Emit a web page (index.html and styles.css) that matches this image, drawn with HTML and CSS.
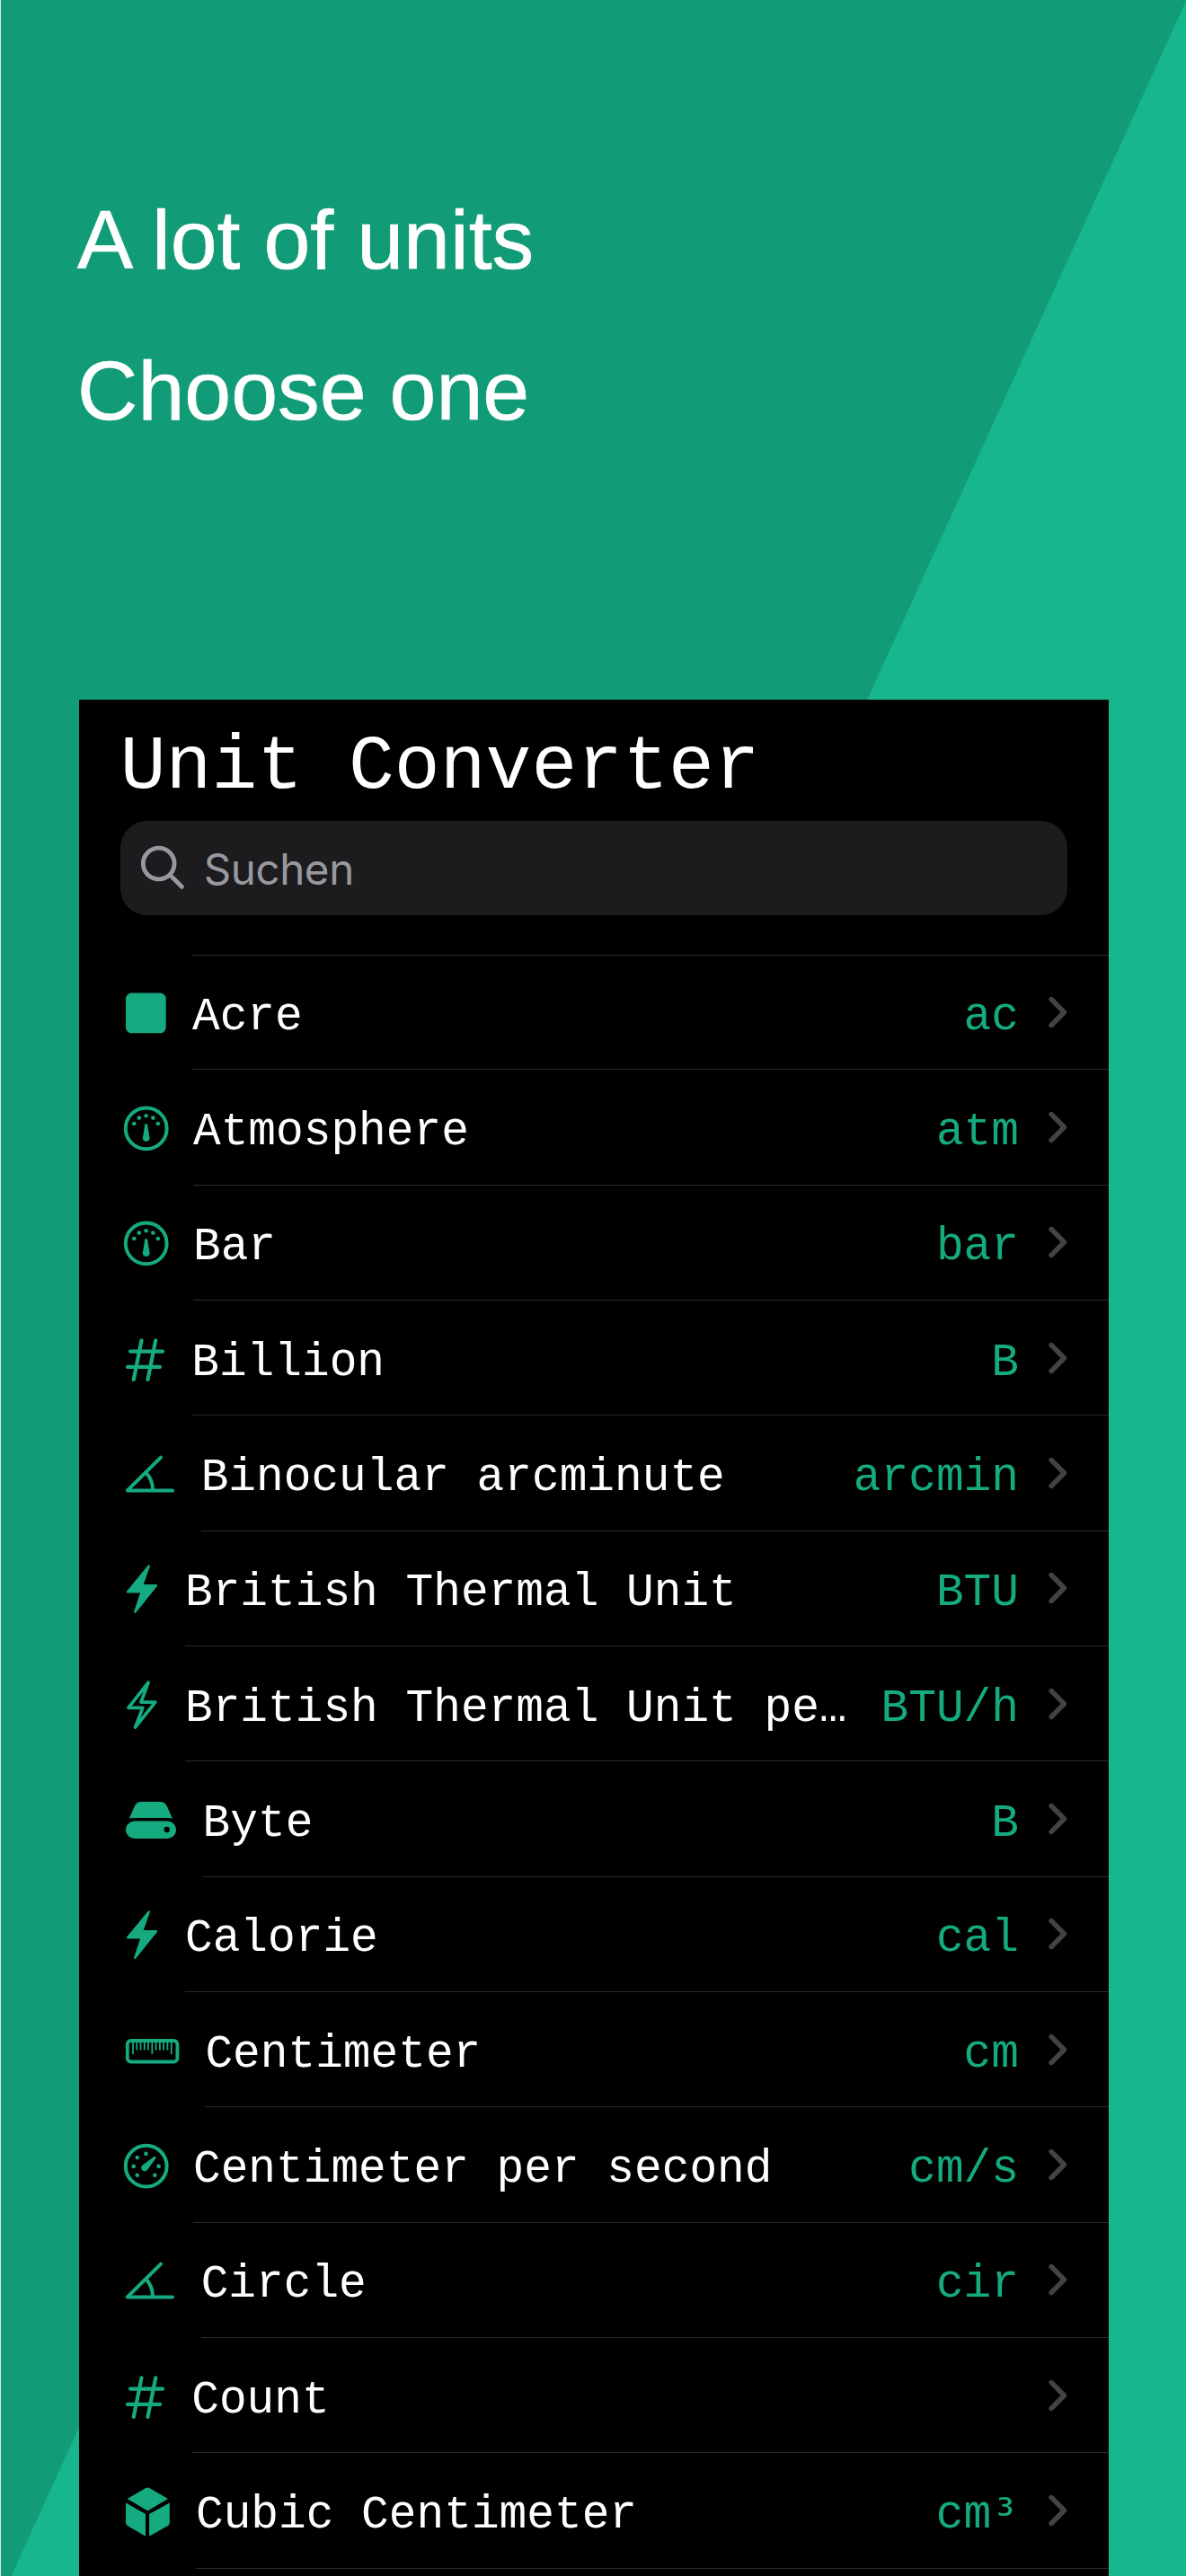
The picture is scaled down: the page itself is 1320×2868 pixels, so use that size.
FILE: index.html
```html
<!DOCTYPE html>
<html lang="en">
<head>
<meta charset="utf-8">
<title>Unit Converter</title>
<link rel="stylesheet" href="styles.css">
</head>
<body>
<svg class="defs" aria-hidden="true">
  <symbol id="square" viewBox="0 -40 80 80"><rect x="6" y="-22.4" width="44.7" height="44.7" rx="6.5" fill="currentColor"/></symbol>
  <symbol id="gauge" viewBox="0 -40 80 80">
    <circle cx="28.7" cy=".4" r="22.9" fill="none" stroke="currentColor" stroke-width="4"/>
    <g fill="currentColor"><circle cx="15.3" cy="-5" r="2.3"/><circle cx="20.8" cy="-11.4" r="2.3"/><circle cx="28.6" cy="-13.7" r="2.3"/><circle cx="36.3" cy="-11.4" r="2.3"/><circle cx="41.8" cy="-5" r="2.3"/>
    <path d="M27.2-3.8Q28.7-6 30.1-3.8L32.6 11.6A3.95 3.95 0 0 1 24.8 11.6Z"/></g>
  </symbol>
  <symbol id="number" viewBox="0 -40 80 80"><path d="M23.5-20.7L14.8 22.9M39.2-20.7L30.5 22.9M11-8.4H47M8 8.9H44" fill="none" stroke="currentColor" stroke-width="4.2" stroke-linecap="round"/></symbol>
  <symbol id="angle" viewBox="0 -40 80 80"><path d="M45-18.4L7.8 18.4H58M28.3-1.6A28.5 28.5 0 0 1 36 18" fill="none" stroke="currentColor" stroke-width="4" stroke-linecap="round" stroke-linejoin="round"/></symbol>
  <symbol id="bolt" viewBox="0 -40 80 80"><path d="M31.7-25.5L24-3.7H39.9L16.2 25.8L23.7 3.3H8.1Z" fill="currentColor" stroke="currentColor" stroke-width="2.4" stroke-linejoin="round"/></symbol>
  <symbol id="bolt-outline" viewBox="0 -40 80 80"><path d="M31.1-24.8L22.9-2.9H38.9L16.5 25L24.9 3.4H8.9Z" fill="none" stroke="currentColor" stroke-width="3.6" stroke-linejoin="round"/></symbol>
  <symbol id="drive" viewBox="0 -40 80 80"><g fill="currentColor"><path d="M9.7-1.3L15.6-14.6Q18-20 23.5-20H44.3Q49.8-20 52.1-14.6L58-1.3Q56-1.9 53-1.9H15Q12-1.9 9.7-1.3Z"/><path fill-rule="evenodd" d="M15.6 1.6H52.4A9.6 9.6 0 0 1 52.4 20.9H15.6A9.6 9.6 0 0 1 15.6 1.6ZM51.7 7.8A3.2 3.2 0 1 0 51.7 14.2A3.2 3.2 0 1 0 51.7 7.8Z"/></g></symbol>
  <symbol id="ruler" viewBox="0 -40 80 80"><rect x="7.8" y="-11" width="55.6" height="23.5" rx="4" fill="none" stroke="currentColor" stroke-width="3.8"/><path d="M14-10V3.9M35.3-10V3.9M56.7-10V3.9M18.3-10V-.5M22.5-10V-.5M26.8-10V-.5M31-10V-.5M39.6-10V-.5M43.9-10V-.5M48.1-10V-.5M52.4-10V-.5" stroke="currentColor" stroke-width="1.8"/></symbol>
  <symbol id="speed" viewBox="0 -40 80 80">
    <circle cx="28.7" cy=".7" r="22.9" fill="none" stroke="currentColor" stroke-width="4"/>
    <g fill="currentColor"><circle cx="28.5" cy="-13.1" r="2.3"/><circle cx="18.7" cy="-8.9" r="2.3"/><circle cx="14.7" cy=".9" r="2.3"/><circle cx="42.6" cy=".9" r="2.3"/><circle cx="18.7" cy="10.8" r="2.3"/><circle cx="38.3" cy="10.8" r="2.3"/>
    <path d="M37.4-9.9Q40.2-10.6 39.4-8L30.3 4.6A3.9 3.9 0 1 1 24.1-.1Z"/></g>
  </symbol>
  <symbol id="cube" viewBox="0 -40 80 80"><path fill="currentColor" d="M28.4-26Q30.3-27 32.2-26L53-13.9L30.3-.6L7.7-13.9ZM6-9.6L28 3.1V27.8L8.2 16.2Q6 14.9 6 12.5ZM54.8-9.6L32.1 3.1V27.8L52.6 16.2Q54.8 14.9 54.8 12.5Z"/></symbol>
  <symbol id="chevron" viewBox="0 0 24 40"><path d="M5.2 5.6L19.4 20L5.2 34.4" fill="none" stroke="currentColor" stroke-width="5.6" stroke-linecap="round" stroke-linejoin="round"/></symbol>
</svg>
<main class="poster">
  <header class="headline">
    <p>A lot of units</p>
    <p>Choose one</p>
  </header>
  <section class="screen">
    <h1 class="title">Unit Converter</h1>
    <div class="search">
      <svg class="search-icon" viewBox="0 0 56 56"><circle cx="22.7" cy="22.5" r="17.4"/><path d="M35.3 35.3L48.4 48.2"/></svg>
      <span class="placeholder">Suchen</span>
    </div>
    <ul class="units">
      <li class="row square"><svg class="icon"><use href="#square"/></svg><div class="cell"><span class="name">Acre</span><span class="abbr">ac</span><svg class="chevron"><use href="#chevron"/></svg></div></li>
      <li class="row gauge"><svg class="icon"><use href="#gauge"/></svg><div class="cell"><span class="name">Atmosphere</span><span class="abbr">atm</span><svg class="chevron"><use href="#chevron"/></svg></div></li>
      <li class="row gauge"><svg class="icon"><use href="#gauge"/></svg><div class="cell"><span class="name">Bar</span><span class="abbr">bar</span><svg class="chevron"><use href="#chevron"/></svg></div></li>
      <li class="row number"><svg class="icon"><use href="#number"/></svg><div class="cell"><span class="name">Billion</span><span class="abbr">B</span><svg class="chevron"><use href="#chevron"/></svg></div></li>
      <li class="row angle"><svg class="icon"><use href="#angle"/></svg><div class="cell"><span class="name">Binocular arcminute</span><span class="abbr">arcmin</span><svg class="chevron"><use href="#chevron"/></svg></div></li>
      <li class="row bolt"><svg class="icon"><use href="#bolt"/></svg><div class="cell"><span class="name">British Thermal Unit</span><span class="abbr">BTU</span><svg class="chevron"><use href="#chevron"/></svg></div></li>
      <li class="row bolt"><svg class="icon"><use href="#bolt-outline"/></svg><div class="cell"><span class="name">British Thermal Unit pe…</span><span class="abbr">BTU/h</span><svg class="chevron"><use href="#chevron"/></svg></div></li>
      <li class="row drive"><svg class="icon"><use href="#drive"/></svg><div class="cell"><span class="name">Byte</span><span class="abbr">B</span><svg class="chevron"><use href="#chevron"/></svg></div></li>
      <li class="row bolt"><svg class="icon"><use href="#bolt"/></svg><div class="cell"><span class="name">Calorie</span><span class="abbr">cal</span><svg class="chevron"><use href="#chevron"/></svg></div></li>
      <li class="row ruler"><svg class="icon"><use href="#ruler"/></svg><div class="cell"><span class="name">Centimeter</span><span class="abbr">cm</span><svg class="chevron"><use href="#chevron"/></svg></div></li>
      <li class="row gauge"><svg class="icon"><use href="#speed"/></svg><div class="cell"><span class="name">Centimeter per second</span><span class="abbr">cm/s</span><svg class="chevron"><use href="#chevron"/></svg></div></li>
      <li class="row angle"><svg class="icon"><use href="#angle"/></svg><div class="cell"><span class="name">Circle</span><span class="abbr">cir</span><svg class="chevron"><use href="#chevron"/></svg></div></li>
      <li class="row number"><svg class="icon"><use href="#number"/></svg><div class="cell"><span class="name">Count</span><span class="abbr"></span><svg class="chevron"><use href="#chevron"/></svg></div></li>
      <li class="row cube"><svg class="icon"><use href="#cube"/></svg><div class="cell"><span class="name">Cubic Centimeter</span><span class="abbr">cm<span class="power">³</span></span><svg class="chevron"><use href="#chevron"/></svg></div></li>
    </ul>
  </section>
</main>
</body>
</html>
```
FILE: styles.css
```css
* {
  box-sizing: border-box;
}

body {
  margin: 0;
  background: #129b77;
}

.defs {
  display: none;
}

.poster {
  width: 1320px;
  height: 2868px;
  overflow: hidden;
  display: flex;
  flex-direction: column;
  padding: 0 86px 0 86.7px;
  border-left: 1px solid #d3ebe4;
  background: linear-gradient(to bottom right, #129b77 50%, #18b68f calc(50% + 1px)) right / 1308px 100% no-repeat #129b77;
}

.headline {
  height: 779px;
  flex: none;
  padding-top: 183px;
  margin-left: -1.7px;
}

.headline p {
  margin: 0;
  height: 168px;
  color: #fff;
  font: 93.3px/168px "Liberation Sans", Arial, sans-serif;
  white-space: nowrap;
  -webkit-text-stroke: .6px #fff;
}

.screen {
  flex: none;
  height: 2089px;
  overflow: hidden;
  background: #000;
  font-family: "Liberation Mono", "Courier New", monospace;
}

.title {
  margin: 25px 0 0 46px;
  height: 100px;
  color: #fff;
  font-size: 84.75px;
  font-weight: 400;
  line-height: 100px;
  white-space: nowrap;
}

.search {
  display: flex;
  align-items: center;
  height: 105px;
  margin: 10px 46px 0;
  padding-left: 20px;
  border-radius: 30px;
  background: #1c1c1e;
}

.search-icon {
  flex: none;
  width: 56px;
  height: 56px;
  margin-right: 17px;
  fill: none;
  stroke: #98989f;
  stroke-width: 4.8;
  stroke-linecap: round;
}

.placeholder {
  color: #98989f;
  font: 47.5px/60px Inter, "Liberation Sans", sans-serif;
  letter-spacing: -.4px;
  padding-top: 2px;
}

.units {
  list-style: none;
  margin: 44px 0 0;
  padding: 0 0 0 46.3px;
}

.row {
  display: flex;
  height: 128.35px;
}

.icon {
  flex: none;
  width: 80px;
  height: 80px;
  margin-top: 24.5px;
  color: #15aa80;
}

.square .icon { margin-right: 0; }
.gauge .icon { margin-right: 1px; }
.number .icon { margin-right: -.8px; }
.angle .icon { margin-right: 9.7px; }
.bolt .icon { margin-right: -8px; }
.drive .icon { margin-right: 11.6px; }
.ruler .icon { margin-right: 14.4px; }
.cube .icon { margin-right: 4px; }

.cell {
  flex: 1;
  min-width: 0;
  display: flex;
  align-items: center;
  padding-right: 45px;
  border-bottom: 1px solid #2a2a2c;
  font-size: 51.15px;
  line-height: 60px;
  white-space: nowrap;
}

.row:first-child .cell {
  border-top: 1px solid #2a2a2c;
}

.name {
  flex: 1;
  color: #fff;
  padding-top: 10px;
}

.abbr {
  color: #15aa80;
  padding-top: 10px;
}

.power {
  font-family: "DejaVu Sans Mono", monospace;
  line-height: 0;
  vertical-align: -4px;
}

.chevron {
  flex: none;
  width: 24px;
  height: 40px;
  margin-left: 31px;
  color: #434345;
}
```
